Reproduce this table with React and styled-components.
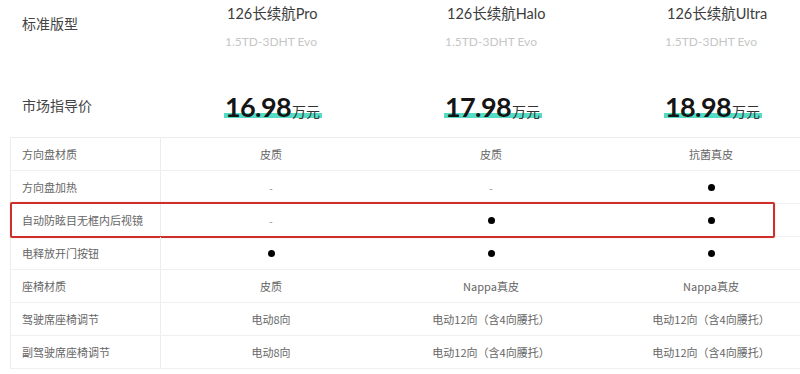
import React from 'react'
import styled, { createGlobalStyle } from 'styled-components'

const GlobalStyle = createGlobalStyle`
  body {
    margin: 0;
    background: #fff;
    font-family: "Lato", "Noto Sans CJK SC", sans-serif;
  }
`

const models = [
  { name: '126长续航Pro', engine: '1.5TD-3DHT Evo', price: '16.98' },
  { name: '126长续航Halo', engine: '1.5TD-3DHT Evo', price: '17.98' },
  { name: '126长续航Ultra', engine: '1.5TD-3DHT Evo', price: '18.98' }
]

const DOT = 'dot'
const NONE = 'none'

const specs = [
  { label: '方向盘材质', values: ['皮质', '皮质', '抗菌真皮'] },
  { label: '方向盘加热', values: [NONE, NONE, DOT] },
  { label: '自动防眩目无框内后视镜', values: [NONE, DOT, DOT], marked: true },
  { label: '电释放开门按钮', values: [DOT, DOT, DOT] },
  { label: '座椅材质', values: ['皮质', 'Nappa真皮', 'Nappa真皮'] },
  { label: '驾驶席座椅调节', values: ['电动8向', '电动12向（含4向腰托）', '电动12向（含4向腰托）'] },
  { label: '副驾驶席座椅调节', values: ['电动8向', '电动12向（含4向腰托）', '电动12向（含4向腰托）'] }
]

const renderValue = v => {
  if (v === DOT) return <Dot />
  if (v === NONE) return <Dash>-</Dash>
  return v
}

export default function App() {
  return (
    <Page>
      <GlobalStyle />
      <HeadRow>
        <HeadLabel>标准版型</HeadLabel>
        {models.map(m => (
          <ModelCell key={m.name}>
            <ModelName>{m.name}</ModelName>
            <Engine>{m.engine}</Engine>
          </ModelCell>
        ))}
      </HeadRow>
      <PriceRow>
        <HeadLabel>市场指导价</HeadLabel>
        {models.map(m => (
          <PriceCell key={m.name}>
            <Price>
              <Num>{m.price}</Num>
              <Unit>万元</Unit>
            </Price>
          </PriceCell>
        ))}
      </PriceRow>
      <Table>
        {specs.map(s => (
          <Row key={s.label} marked={s.marked}>
            <Label>{s.label}</Label>
            {s.values.map((v, i) => (
              <Cell key={i}>{renderValue(v)}</Cell>
            ))}
          </Row>
        ))}
      </Table>
    </Page>
  )
}

const Page = styled.div`
  width: 800px;
  height: 374px;
  overflow: hidden;
  padding-left: 10px;
  box-sizing: border-box;
`

const cols = `
  display: grid;
  grid-template-columns: 150px 220px 220px 220px;
  width: 810px;
`

const HeadRow = styled.div`
  ${cols}
  height: 70px;
`

const PriceRow = styled.div`
  ${cols}
  height: 67px;
`

const HeadLabel = styled.div`
  display: flex;
  align-items: center;
  padding-left: 12px;
  font-size: 14px;
  color: #444;
  font-family: "Noto Sans CJK SC", sans-serif;
  ${HeadRow} & {
    align-items: flex-start;
    padding-top: 13px;
  }
  ${PriceRow} & {
    padding-top: 2px;
  }
`

const ModelCell = styled.div`
  display: flex;
  flex-direction: column;
  padding-left: 67px;
  padding-top: 4px;
`

const ModelName = styled.div`
  font-size: 14.5px;
  line-height: 20px;
  color: #3c3c3c;
  font-weight: 400;
`

const Engine = styled.div`
  margin-top: 9px;
  margin-left: -2px;
  font-size: 12px;
  line-height: 18px;
  color: #c6c6c6;
`

const PriceCell = styled.div`
  display: flex;
  align-items: center;
  padding-left: 64px;
  padding-top: 6px;
`

const Price = styled.div`
  display: inline-flex;
  align-items: baseline;
  padding: 0 2px 0 1px;
  background: linear-gradient(to bottom, transparent 72%, #55dcc6 72%, #55dcc6 90%, transparent 90%);
`

const Num = styled.span`
  font-size: 27px;
  font-weight: 700;
  line-height: 28px;
  color: #151515;
  letter-spacing: -0.6px;
`

const Unit = styled.span`
  font-size: 14px;
  color: #333;
  margin-left: 1px;
  font-family: "Noto Sans CJK SC", sans-serif;
`

const Table = styled.div`
  border-left: 1px solid #ededed;
  border-top: 1px solid #ededed;
  width: 810px;
`

const Row = styled.div`
  ${cols}
  height: 32px;
  border-bottom: 1px solid #f0f0f0;
  position: relative;
  ${p => p.marked && `
    &::after {
      content: '';
      position: absolute;
      left: -1px;
      right: 46px;
      top: -2px;
      bottom: -2px;
      border: 2px solid #cf2f2a;
      border-radius: 2px;
      box-shadow: 0 0 1px rgba(207, 47, 42, 0.5);
      pointer-events: none;
    }
  `}
`

const Label = styled.div`
  display: flex;
  align-items: center;
  padding-left: 11px;
  font-size: 11px;
  color: #666;
  border-right: 1px solid #ededed;
  font-family: "Noto Sans CJK SC", sans-serif;
`

const Cell = styled.div`
  display: flex;
  align-items: center;
  justify-content: center;
  font-size: 11px;
  color: #666;
  font-family: "Noto Sans CJK SC", sans-serif;
`

const Dot = styled.span`
  width: 7px;
  height: 7px;
  border-radius: 50%;
  background: #000;
`

const Dash = styled.span`
  color: #888;
  font-size: 10px;
`
